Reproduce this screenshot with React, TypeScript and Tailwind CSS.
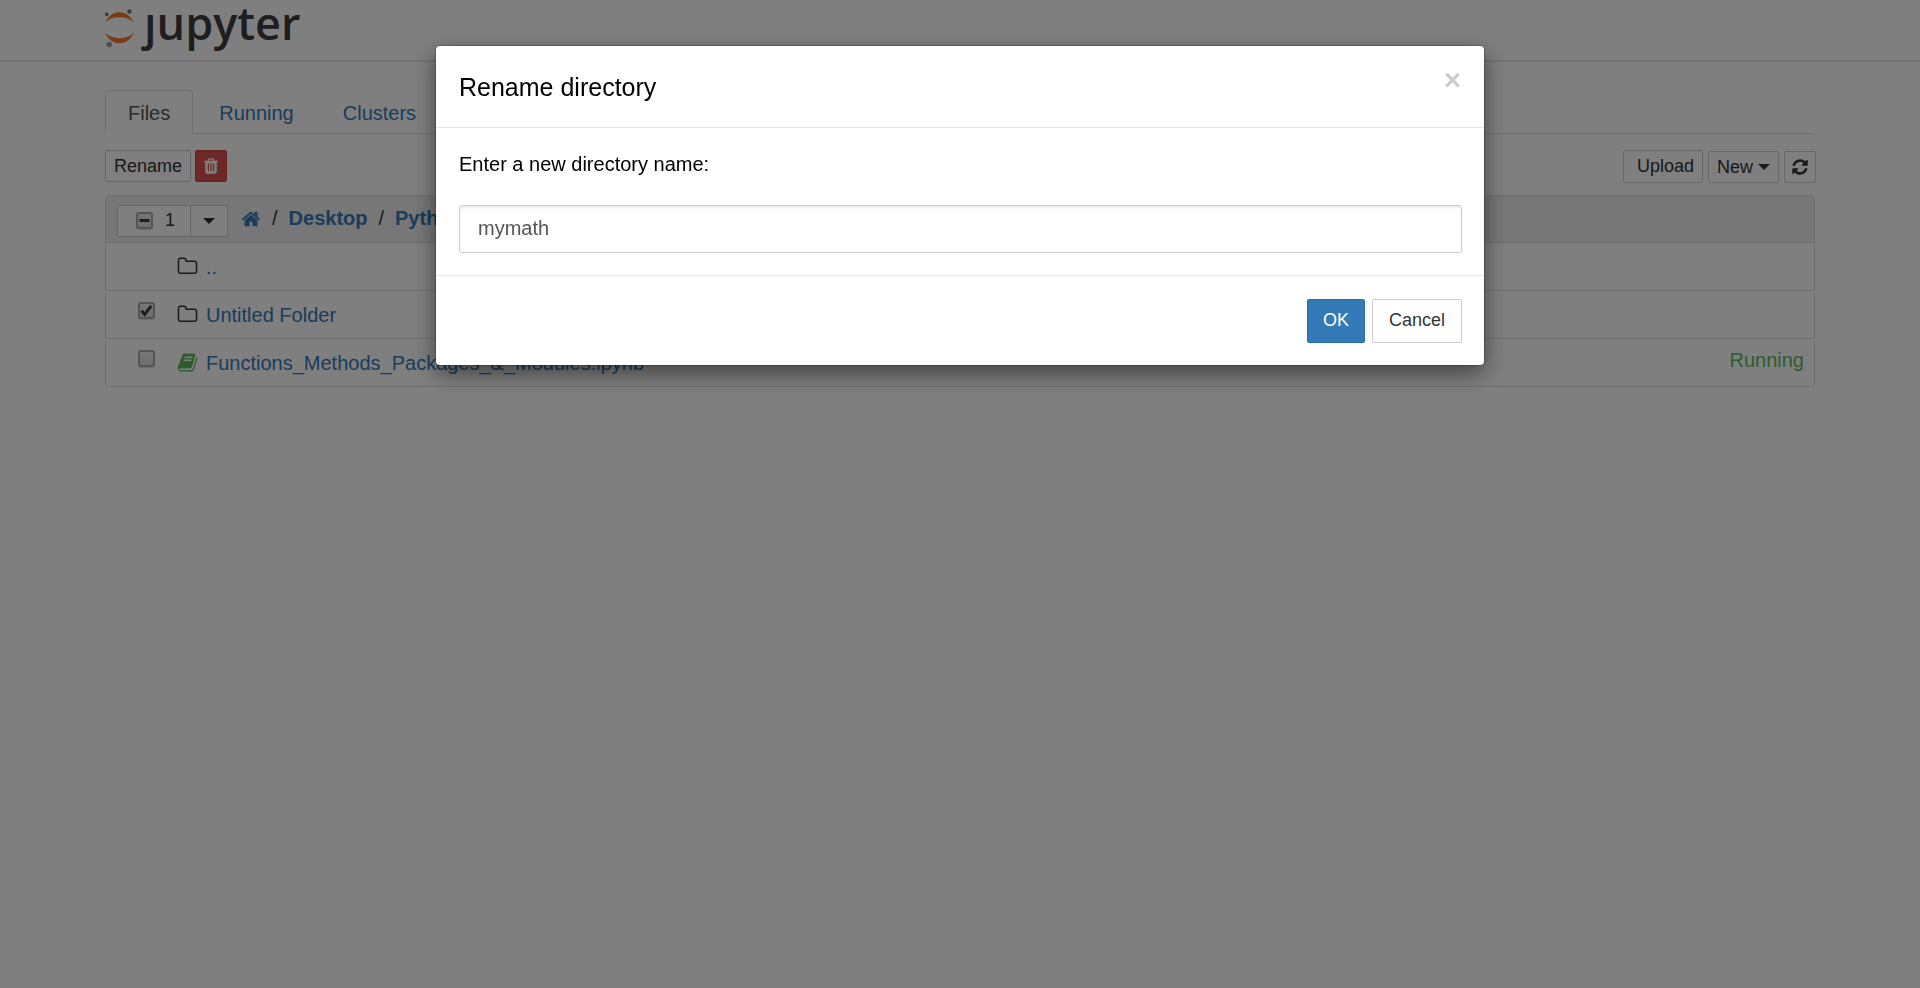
import type { ReactNode } from 'react';

const ICONS = {
  trash:
    'M704 1376v-704q0-14-9-23t-23-9h-64q-14 0-23 9t-9 23v704q0 14 9 23t23 9h64q14 0 23-9t9-23zm256 0v-704q0-14-9-23t-23-9h-64q-14 0-23 9t-9 23v704q0 14 9 23t23 9h64q14 0 23-9t9-23zm256 0v-704q0-14-9-23t-23-9h-64q-14 0-23 9t-9 23v704q0 14 9 23t23 9h64q14 0 23-9t9-23zm-544-992h448l-48-117q-7-9-17-11h-317q-10 2-17 11zm928 32v64q0 14-9 23t-23 9h-96v948q0 83-47 143.5t-113 60.5h-832q-66 0-113-58.5t-47-141.5v-952h-96q-14 0-23-9t-9-23v-64q0-14 9-23t23-9h309l70-167q15-37 54-63t79-26h320q40 0 79 26t54 63l70 167h309q14 0 23 9t9 23z',
  home:
    'M1472 992v480q0 26-19 45t-45 19h-384v-384h-256v384h-384q-26 0-45-19t-19-45v-480q0-1 .5-3t.5-3l575-474 575 474q1 2 1 6zm223-69l-62 74q-8 9-21 11h-3q-13 0-21-7l-692-577-692 577q-12 8-24 7-13-2-21-11l-62-74q-8-10-7-23.5t11-21.5l719-599q32-26 76-26t76 26l244 204v-195q0-14 9-23t23-9h192q14 0 23 9t9 23v408l219 182q10 8 11 21.5t-7 23.5z',
  folder:
    'M1600 1312v-704q0-40-28-68t-68-28h-704q-40 0-68-28t-28-68v-64q0-40-28-68t-68-28h-320q-40 0-68 28t-28 68v960q0 40 28 68t68 28h1216q40 0 68-28t28-68zm128-704v704q0 92-66 158t-158 66h-1216q-92 0-158-66t-66-158v-960q0-92 66-158t158-66h320q92 0 158 66t66 158v32h672q92 0 158 66t66 158z',
  book:
    'M1703 478q40 57 18 129l-275 906q-19 64-76.5 107.5t-122.5 43.5h-923q-77 0-148.5-53.5t-99.5-131.5q-24-67-2-127 0-4 3-27t4-37q1-8-3-21.5t-3-19.5q2-11 8-21t16.5-23.5 16.5-23.5q23-38 45-91.5t30-91.5q3-10 .5-30t-.5-28q3-11 17-28t17-23q21-36 42-92t25-90q1-9-2.5-32t.5-28q4-13 22-30.5t22-22.5q19-26 42.5-84.5t27.5-96.5q1-8-3-25.5t-2-26.5q2-8 9-18t18-23 17-21q8-12 16.5-30.5t15-35 16-36 19.5-32 26.5-23.5 36-11.5 47.5 5.5l-1 3q38-9 51-9h761q74 0 114 56t18 130l-274 906q-36 119-71.5 153.5t-128.5 34.5h-869q-27 0-38 15-11 16-1 43 24 70 144 70h923q29 0 56-15.5t35-41.5l300-987q7-22 5-57 38 15 59 43zm-1064 2q-4 13 2 22.5t20 9.5h608q13 0 25.5-9.5t16.5-22.5l21-64q4-13-2-22.5t-20-9.5h-608q-13 0-25.5 9.5t-16.5 22.5zm-83 256q-4 13 2 22.5t20 9.5h608q13 0 25.5-9.5t16.5-22.5l21-64q4-13-2-22.5t-20-9.5h-608q-13 0-25.5 9.5t-16.5 22.5z',
  refresh:
    'M1639 1056q0 5-1 7-64 268-268 434.5t-478 166.5q-146 0-282.5-55t-243.5-157l-129 129q-19 19-45 19t-45-19-19-45v-448q0-26 19-45t45-19h448q26 0 45 19t19 45-19 45l-137 137q71 66 161 102t187 36q134 0 250-65t186-179q11-17 53-117 8-23 30-23h192q13 0 22.5 9.5t9.5 22.5zm25-800v448q0 26-19 45t-45 19h-448q-26 0-45-19t-19-45 19-45l138-138q-148-137-349-137-134 0-250 65t-186 179q-11 17-53 117-8 23-30 23h-199q-13 0-22.5-9.5t-9.5-22.5v-7q65-268 270-434.5t480-166.5q146 0 284 55.5t245 156.5l130-129q19-19 45-19t45 19 19 45z',
};

function Icon({ name, className }: { name: keyof typeof ICONS; className: string }) {
  return (
    <svg viewBox="0 0 1792 1792" fill="currentColor" aria-hidden="true" className={`shrink-0 ${className}`}>
      <path d={ICONS[name]} />
    </svg>
  );
}

function Caret() {
  return (
    <svg viewBox="0 0 12 6" fill="currentColor" aria-hidden="true" className="h-[6px] w-3 shrink-0">
      <path d="M0 0h12L6 6z" />
    </svg>
  );
}

function Logo() {
  return (
    <a href="#" aria-label="jupyter" className="flex h-[60px] items-start text-[#3d3d3d]">
      <svg viewBox="0 0 30 40" aria-hidden="true" className="mt-[9px] h-10 w-[30px] shrink-0">
        <path d="M0 14C3 7 8.500 3.200 14.500 3.200S26 7 29 14C25.500 10 20.500 8.300 14.500 8.300S3.500 10 0 14z" fill="#f37726" />
        <path d="M0 23.500C3 30.500 8.500 34.200 14.500 34.200S26 30.500 29 23.500C25.500 27.300 20.500 29.200 14.500 29.200S3.500 27.300 0 23.500z" fill="#f37726" />
        <circle cx="1.700" cy="5.300" r="1.700" fill="#616262" />
        <circle cx="24.500" cy="2.500" r="2.200" fill="#767677" />
        <circle cx="4.200" cy="35.500" r="2.700" fill="#989798" />
      </svg>
      <span className="pl-[9px] font-['Open_Sans',sans-serif] text-[45px] leading-[46px] font-semibold">ȷupyter</span>
    </a>
  );
}

function Tick({ label, state }: { label: string; state: 'on' | 'off' | 'mixed' }) {
  return (
    <span className="relative inline-grid size-[17px] shrink-0">
      <input
        type="checkbox"
        aria-label={label}
        defaultChecked={state === 'on'}
        className="size-[17px] appearance-none rounded-[3px] border-2 border-[#a9a9a9] bg-linear-to-b from-[#ededed] to-[#dedede] shadow-[0_1px_1px_rgba(0,0,0,0.15)]"
      />
      {state !== 'off' && (
        <svg viewBox="0 0 17 17" fill="none" stroke="#3c3c3c" aria-hidden="true" className="pointer-events-none absolute inset-0 size-[17px]">
          {state === 'on' ? <path d="M3.500 8.800l3.200 3.500L13.200 3.800" strokeWidth="3" /> : <path d="M3.500 8.500h10" strokeWidth="3" />}
        </svg>
      )}
    </span>
  );
}

const smallButton = 'flex items-center rounded-[2px] border border-[#ccc] bg-white text-[18px] leading-[27px] text-[#333]';

function Row({ icon, name, check, status }: { icon: ReactNode; name: string; check?: ReactNode; status?: string }) {
  return (
    <li className="flex h-12 items-center border-b border-[#ddd] pr-[10px] pl-8 last:h-[47px] last:border-b-0">
      <span className="flex w-[39px] pb-2">{check}</span>
      <span className="flex w-[29px]">{icon}</span>
      <a href="#" className="pt-px text-[#337ab7]">{name}</a>
      {status && <span className="ml-auto pb-1 text-[#5cb85c]">{status}</span>}
    </li>
  );
}

function Dialog() {
  return (
    <div className="fixed inset-0 bg-black/50 px-6 pt-[46px]">
      <form
        role="dialog"
        aria-labelledby="dialog-title"
        onSubmit={(e) => e.preventDefault()}
        className="mx-auto max-w-[1048px] rounded-[4px] bg-white text-black shadow-[0_0_1px_1px_rgba(0,0,0,0.2),0_8px_23px_rgba(0,0,0,0.5)]"
      >
        <header className="flex items-start justify-between border-b border-[#e5e5e5] px-[23px] pt-6 pb-[22px]">
          <h4 id="dialog-title" className="text-[25px] leading-[35px]">Rename directory</h4>
          <button type="button" aria-label="Close" className="text-[29px] leading-[20px] font-bold text-[#ccc]">×</button>
        </header>
        <div className="pt-[23px] pr-[22px] pb-[22px] pl-[23px]">
          <label htmlFor="dir-name" className="block pb-[27px] leading-[27px]">Enter a new directory name:</label>
          <input
            id="dir-name"
            type="text"
            defaultValue="mymath"
            className="block h-12 w-full rounded-[3px] border border-[#ccc] px-[18px] pb-[2px] text-[#555] shadow-[inset_0_2px_2px_rgba(0,0,0,0.075)]"
          />
        </div>
        <footer className="flex justify-end gap-[7px] border-t border-[#e5e5e5] px-[22px] pt-[23px] pb-[22px] text-[18px]">
          <button type="submit" className="h-11 rounded-[2px] border border-[#2e6da4] bg-[#337ab7] px-[15px] pb-[2px] text-white">OK</button>
          <button type="button" className="h-11 rounded-[2px] border border-[#ccc] bg-white px-4 pb-[2px] text-[#333]">Cancel</button>
        </footer>
      </form>
    </div>
  );
}

export default function App() {
  return (
    <div className="min-h-screen bg-white font-['Liberation_Sans',Arial,sans-serif] text-[20px] leading-[27px] text-[#333]">
      <header className="border-b-2 border-[#e7e7e7] px-[105px]">
        <Logo />
      </header>

      <main className="px-[105px] pt-7">
        <nav className="flex gap-[3px] border-b border-[#ddd] text-[#337ab7]">
          <a href="#" aria-current="page" className="-mb-px rounded-t-[3px] border border-b-0 border-[#ddd] bg-white px-[22px] pt-[9px] pb-[7px] text-[#555]">Files</a>
          <a href="#" className="border border-b-0 border-transparent px-[22px] pt-[9px] pb-[6px]">Running</a>
          <a href="#" className="border border-b-0 border-transparent px-[22px] pt-[9px] pb-[6px]">Clusters</a>
        </nav>

        <div className="flex items-start justify-between pt-4 pb-3">
          <div className="flex gap-1">
            <button type="button" className={`${smallButton} h-8 px-2`}>Rename</button>
            <button type="button" aria-label="Delete" className="flex h-8 w-8 items-center justify-center rounded-[2px] border border-[#d43f3a] bg-[#d9534f] pb-px text-white">
              <Icon name="trash" className="size-[18px]" />
            </button>
          </div>
          <div className="-mr-px flex items-end gap-[5px]">
            <button type="button" className={`${smallButton} h-[33px] pr-2 pl-[13px]`}>Upload</button>
            <button type="button" className={`${smallButton} h-8 gap-[5px] px-2`}>
              New
              <Caret />
            </button>
            <button type="button" aria-label="Refresh" className={`${smallButton} h-8 w-8 justify-center`}>
              <Icon name="refresh" className="size-[18px]" />
            </button>
          </div>
        </div>

        <section className="rounded-[3px] border border-[#ddd]">
          <div className="flex h-[47px] items-center border-b border-[#ddd] bg-[#eee] pl-[11px]">
            <div className="mt-[3px] flex">
              <span className="flex h-8 w-[74px] items-center gap-3 rounded-l-[2px] border border-[#ccc] bg-white pb-px pl-[18px] text-[18px] text-[#333]">
                <Tick label="Select all" state="mixed" />
                1
              </span>
              <button type="button" aria-label="Select by type" className="-ml-px flex h-8 w-[38px] items-center justify-center rounded-r-[2px] border border-[#ccc] bg-white text-[#333]">
                <Caret />
              </button>
            </div>
            <nav className="flex items-center gap-[11px] pb-px pl-[13px] font-bold text-[#337ab7]">
              <a href="#" aria-label="Home"><Icon name="home" className="size-5" /></a>
              <span className="font-normal text-[#333]">/</span>
              <a href="#">Desktop</a>
              <span className="font-normal text-[#333]">/</span>
              <a href="#">Python</a>
            </nav>
          </div>
          <ul>
            <Row icon={<Icon name="folder" className="size-[21px]" />} name=".." />
            <Row icon={<Icon name="folder" className="size-[21px]" />} name="Untitled Folder" check={<Tick label="Untitled Folder" state="on" />} />
            <Row
              icon={<Icon name="book" className="size-[21px] text-[#5cb85c]" />}
              name="Functions_Methods_Packages_&_Modules.ipynb"
              check={<Tick label="Functions_Methods_Packages_&_Modules.ipynb" state="off" />}
              status="Running"
            />
          </ul>
        </section>
      </main>

      <Dialog />
    </div>
  );
}
